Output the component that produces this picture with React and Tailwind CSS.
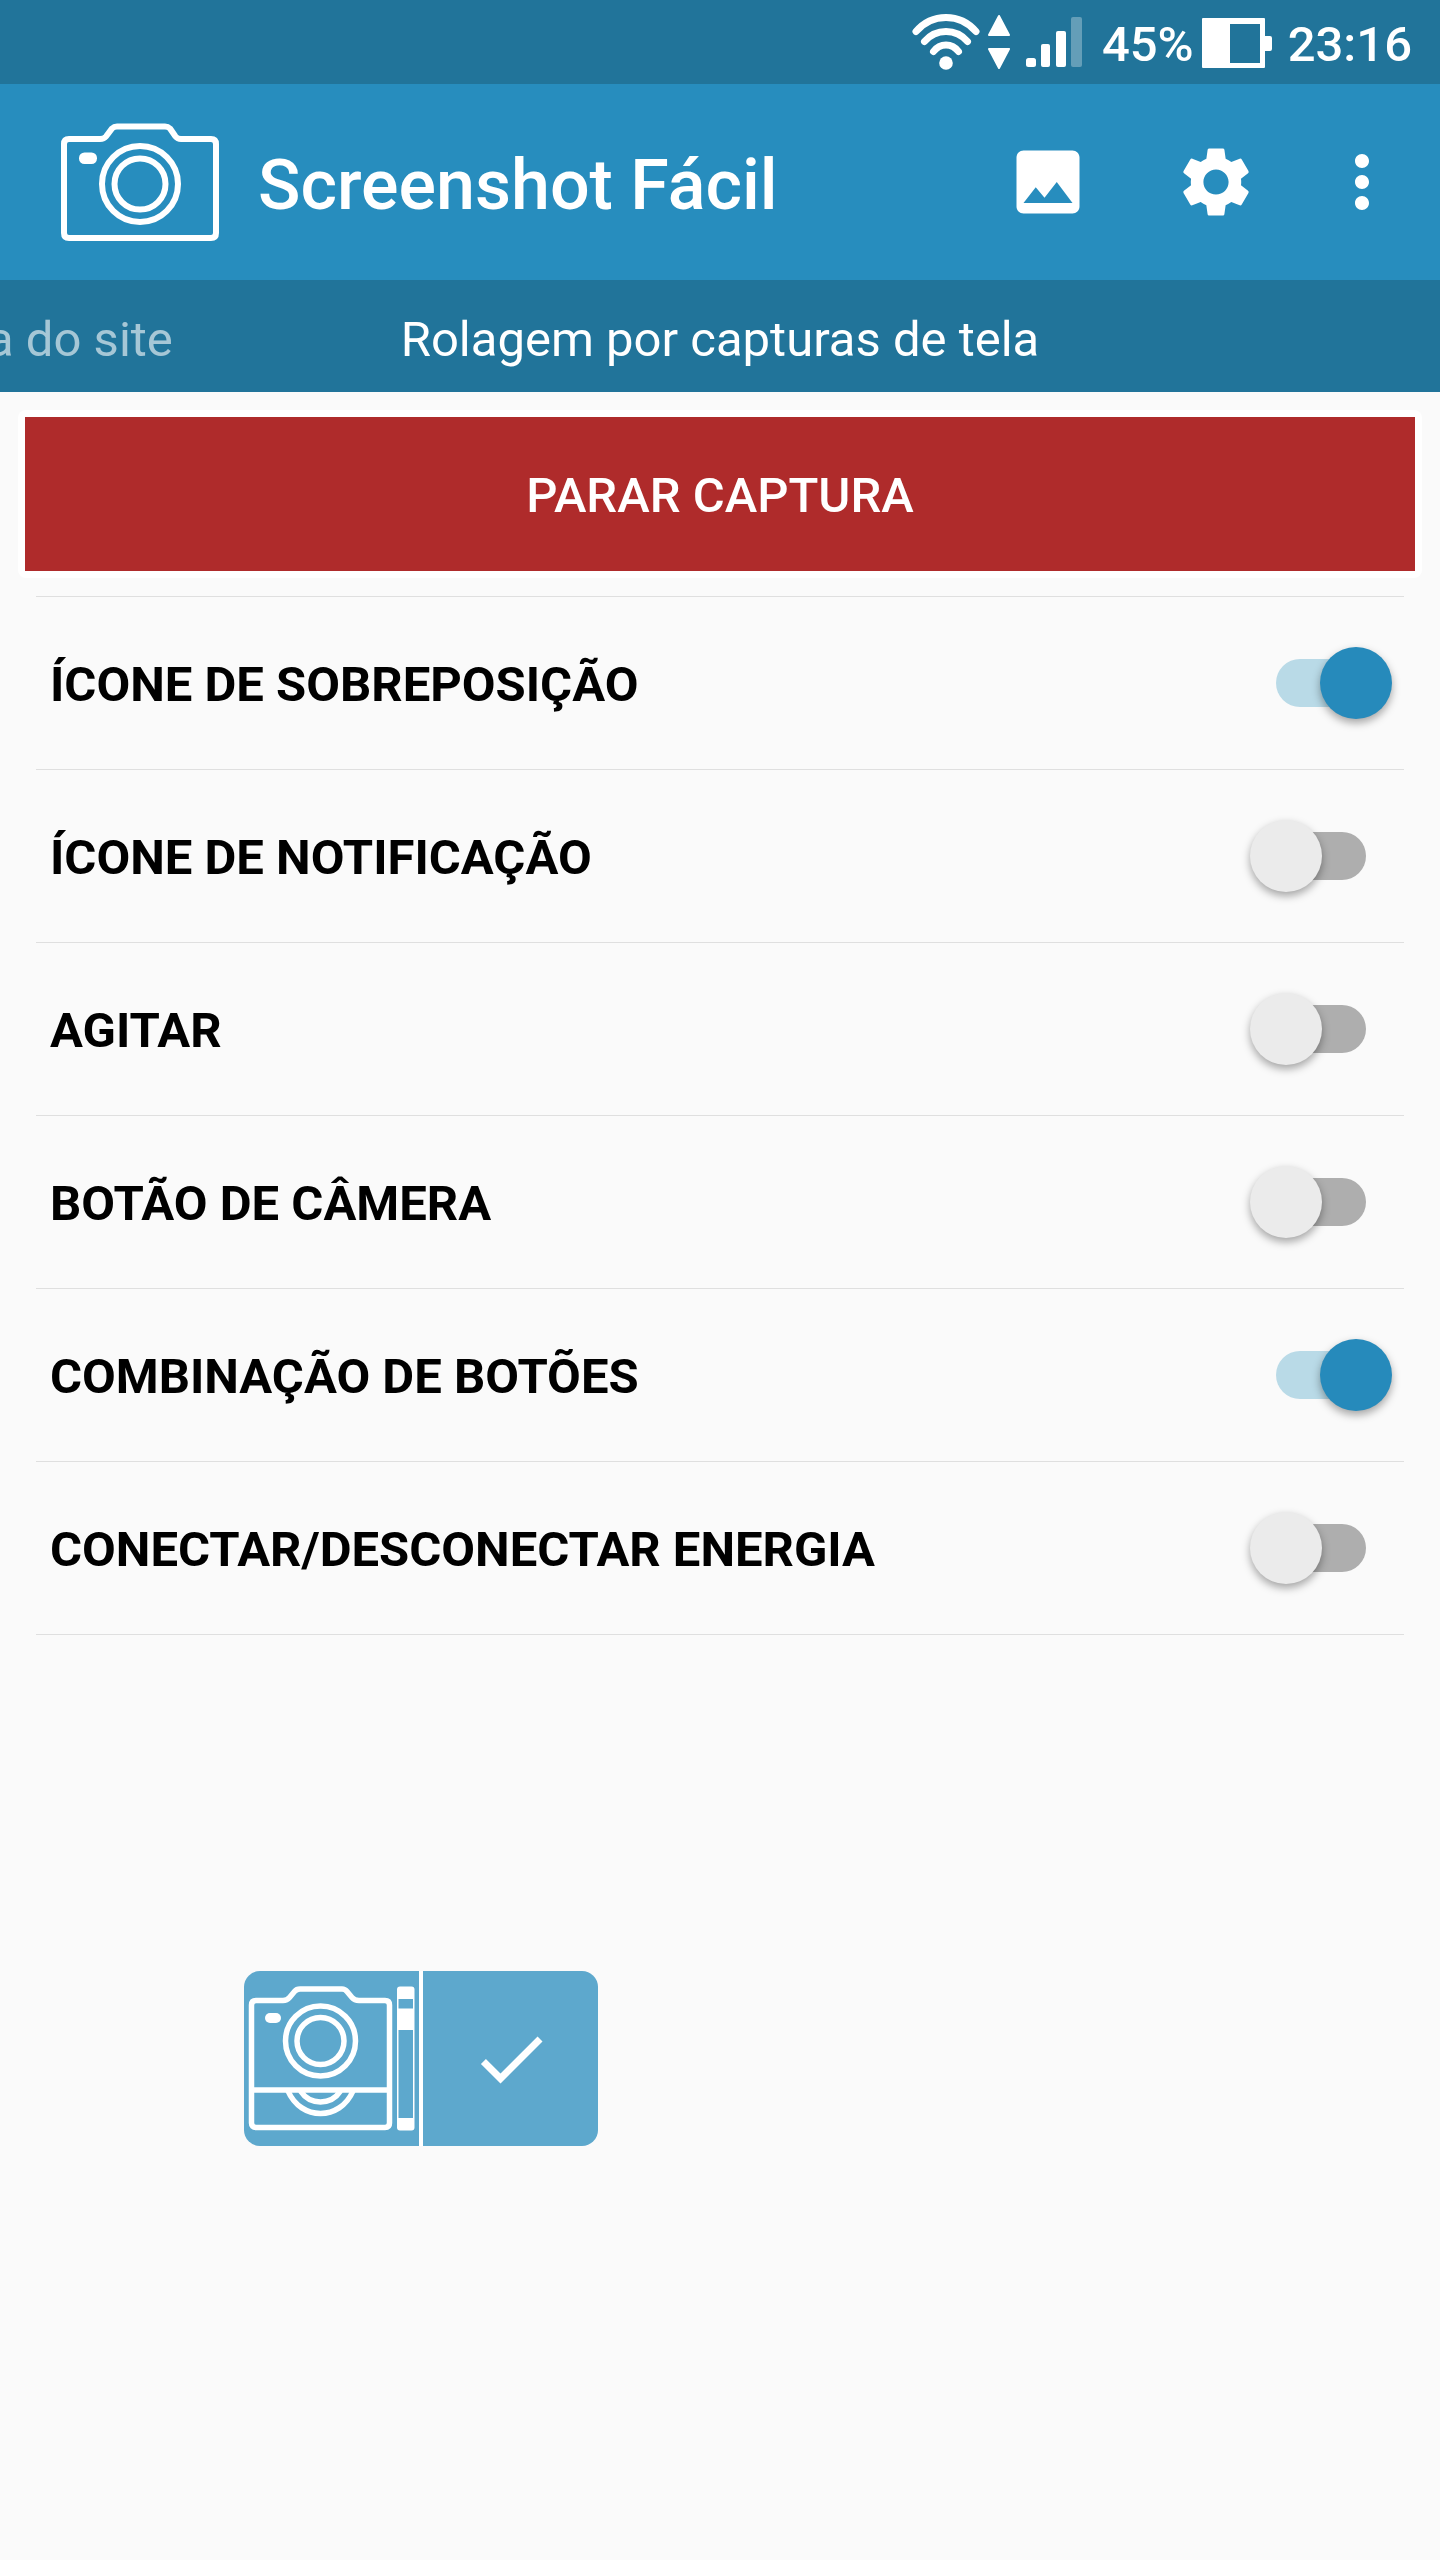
import { useState } from 'react';
import { MdCheck, MdImage, MdSettings, MdMoreVert } from 'react-icons/md';

const initialTriggers = [
  { id: 'overlay', label: 'ÍCONE DE SOBREPOSIÇÃO', on: true },
  { id: 'notification', label: 'ÍCONE DE NOTIFICAÇÃO', on: false },
  { id: 'shake', label: 'AGITAR', on: false },
  { id: 'camera', label: 'BOTÃO DE CÂMERA', on: false },
  { id: 'combo', label: 'COMBINAÇÃO DE BOTÕES', on: true },
  { id: 'power', label: 'CONECTAR/DESCONECTAR ENERGIA', on: false },
];

function StatusBar() {
  return (
    <div className="flex h-[84px] items-center justify-end bg-[#21749a] pr-7 text-white">
      {/* Wifi */}
      <svg width="68" height="84" viewBox="0 0 68 84" fill="none" stroke="currentColor" strokeWidth="7" strokeLinecap="round">
        <path d="M4 31.500C20 12.800 48 12.800 64 31.500" />
        <path d="M12.500 41.500C24 28.200 44 28.200 55.500 41.500" />
        <path d="M21.500 51.500C28 42.800 40 42.800 46.500 51.500" />
        <circle cx="34" cy="63" r="6.800" fill="currentColor" stroke="none" />
      </svg>
      {/* Data arrows */}
      <svg className="ml-2" width="22" height="84" viewBox="0 0 22 84" fill="currentColor" stroke="currentColor" strokeWidth="2" strokeLinejoin="round">
        <path d="M11 16L21 35H1Z" />
        <path d="M11 68L21 49H1Z" />
      </svg>
      {/* Signal */}
      <svg className="ml-4" width="56" height="84" viewBox="0 0 56 84" fill="currentColor">
        <rect x="0" y="58" width="10" height="9" rx="2.500" />
        <rect x="15" y="44" width="9" height="23" rx="2" />
        <rect x="30" y="31" width="10" height="36" rx="2" />
        <rect x="45" y="17" width="11" height="50" rx="2" opacity=".3" />
      </svg>
      <span className="ml-5 pt-1.5 text-[49px] leading-[60px] font-medium">45%</span>
      {/* Battery */}
      <svg className="ml-2" width="70" height="84" viewBox="0 0 70 84" fill="currentColor">
        <path fillRule="evenodd" d="M1 18H62Q63 18 63 19V36H68Q70 36 70 38V49Q70 51 68 51H63V67Q63 68 62 68H1Q0 68 0 67V19Q0 18 1 18ZM28 24V63H58V24Z" />
      </svg>
      <span className="ml-4 pt-1.5 text-[49px] leading-[60px] font-medium">23:16</span>
    </div>
  );
}

function CameraLogo() {
  return (
    <svg width="160" height="120" viewBox="0 0 160 120" fill="none" stroke="white" strokeWidth="6">
      <path d="M9 17H40Q44 17 46 14.500L52 6.500Q54 4.500 57 4.500H105Q108 4.500 110 6.500L115.500 14.500Q117.500 17 121 17H151Q156 17 156 22V111Q156 116 151 116H9Q4 116 4 111V22Q4 17 9 17Z" />
      <circle cx="80" cy="62" r="38" />
      <circle cx="80" cy="62" r="25.500" />
      <rect x="19" y="30.500" width="18" height="11.500" rx="5.500" fill="white" stroke="none" />
    </svg>
  );
}

function ScrollCaptureIcon() {
  return (
    <svg width="175" height="175" viewBox="0 0 175 175" fill="none" stroke="white" strokeWidth="5.500">
      <path d="M12 29.500H39Q43 29.500 45.500 26.500L50.500 20.500Q52.500 18 56 18H98Q101 18 103 20.500L108 26.500Q110.500 29.500 115 29.500H141Q145.500 29.500 145.500 34V152Q145.500 156.500 141 156.500H12Q7.500 156.500 7.500 152V34Q7.500 29.500 12 29.500Z" />
      <path d="M7.500 119H145.500" />
      <circle cx="76.500" cy="70" r="35" />
      <circle cx="76.500" cy="70" r="23.500" />
      <path d="M44 120C57 150 96 150 109 120M56.500 120C66 134.500 87 134.500 96.500 120" />
      <rect x="21" y="42" width="16" height="10" rx="5" fill="white" stroke="none" />
      <path fill="white" stroke="none" fillRule="evenodd" d="M156 15.500H167.500Q170.500 15.500 170.500 18.500V156.500Q170.500 159.500 167.500 159.500H156Q153 159.500 153 156.500V18.500Q153 15.500 156 15.500ZM154.500 28V37.500H169V28ZM154.500 59V147H169V59Z" />
    </svg>
  );
}

function TriggerRow({ trigger, onToggle }) {
  return (
    <li className="border-b border-[#dfdfdf]">
      <label className="flex h-[172px] cursor-pointer items-center justify-between pr-3 pl-3.5">
        <span className="pt-1 text-[49px] leading-[60px] font-bold text-black">{trigger.label}</span>
        <span className={`relative flex h-[72px] w-[142px] shrink-0 items-center ${trigger.on ? 'justify-end' : 'justify-start'}`}>
          <input
            type="checkbox"
            role="switch"
            checked={trigger.on}
            onChange={onToggle}
            className="peer absolute inset-0 cursor-pointer appearance-none"
          />
          <span className="pointer-events-none absolute inset-x-[26px] h-12 rounded-full bg-[#aeaeae] peer-checked:bg-[#b9dae7]" />
          <span className="pointer-events-none relative size-[72px] rounded-full bg-[#ebebeb] shadow-[0_4px_8px_rgba(0,0,0,0.35)] peer-checked:bg-[#268abb]" />
        </span>
      </label>
    </li>
  );
}

export default function App() {
  const [triggers, setTriggers] = useState(initialTriggers);

  const toggle = (id) =>
    setTriggers((list) => list.map((t) => (t.id === id ? { ...t, on: !t.on } : t)));

  return (
    <div className="min-h-screen overflow-hidden bg-[#fafafa] font-['Roboto',sans-serif]">
      <StatusBar />

      {/* App bar */}
      <header className="flex h-[196px] items-center bg-[#278dbe] pr-9 pl-[60px] text-white">
        <CameraLogo />
        <h1 className="ml-[38px] flex-1 pt-1.5 text-[70px] leading-[84px] font-medium">Screenshot Fácil</h1>
        <div className="flex items-center gap-[62px]">
          <div className="flex gap-[84px]">
            <button type="button" aria-label="Galeria"><MdImage size={84} /></button>
            <button type="button" aria-label="Configurações"><MdSettings size={84} /></button>
          </div>
          <button type="button" aria-label="Mais opções"><MdMoreVert size={84} /></button>
        </div>
      </header>

      {/* Tabs */}
      <nav className="relative flex h-28 items-center justify-center bg-[#21749a] pt-2 text-[49px] leading-[60px] text-white">
        <a href="#site" className="absolute right-[88%] whitespace-nowrap text-white/60">a do site</a>
        <a href="#rolagem" aria-current="page">Rolagem por capturas de tela</a>
      </nav>

      <main>
        <div className="mx-[18px] mt-[18px] rounded-lg bg-white p-[7px]">
          <button type="button" className="h-[154px] w-full bg-[#af2b2b] pt-1 text-[49px] leading-[60px] font-medium text-white">
            PARAR CAPTURA
          </button>
        </div>

        <ul className="mx-9 mt-[18px] border-t border-[#dfdfdf]">
          {triggers.map((t) => (
            <TriggerRow key={t.id} trigger={t} onToggle={() => toggle(t.id)} />
          ))}
        </ul>

        {/* Floating capture controls */}
        <div className="mt-[336px] ml-[244px] flex w-fit gap-1 overflow-hidden rounded-2xl bg-white">
          <button type="button" aria-label="Capturar rolagem" className="size-[175px] bg-[#5da8cd]">
            <ScrollCaptureIcon />
          </button>
          <button type="button" aria-label="Concluir" className="flex size-[175px] items-center justify-center bg-[#5da8cd] text-white">
            <MdCheck size={84} />
          </button>
        </div>
      </main>
    </div>
  );
}
